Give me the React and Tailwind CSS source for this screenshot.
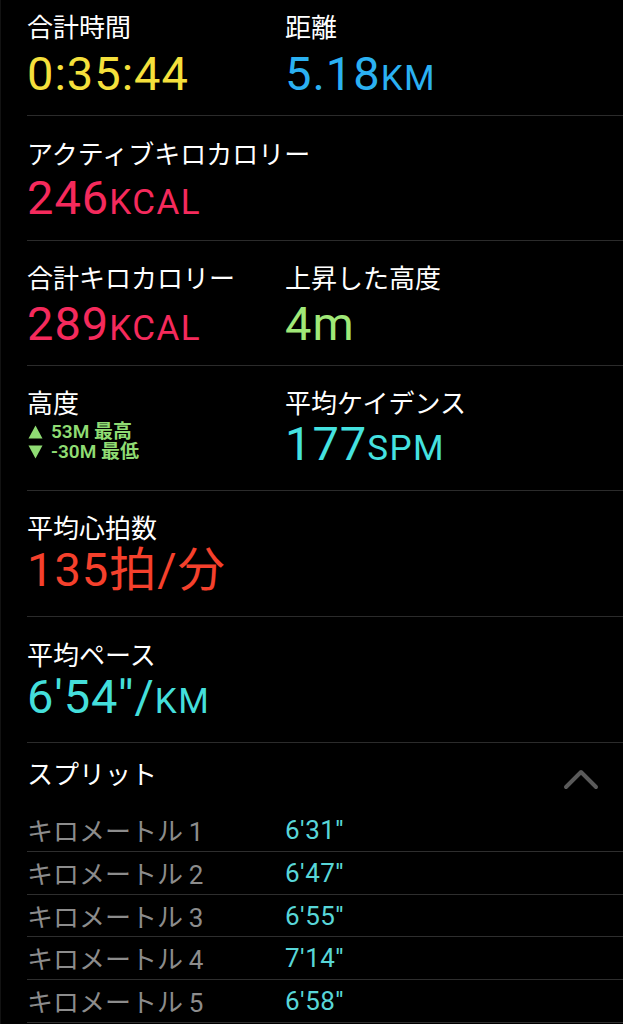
const sans = { fontFamily: 'Roboto, "Noto Sans CJK JP", sans-serif' };
const jp = { fontFamily: '"Noto Sans CJK JP", Roboto, sans-serif' };

function Label({ children }) {
  return (
    <div className="text-[26px] leading-[32px] text-white" style={jp}>
      {children}
    </div>
  );
}

function Value({ num, unit, color, mt = 'mt-[5px]' }) {
  return (
    <div className={`${mt} text-[47px] leading-[47px] tracking-[1px] whitespace-nowrap ${color}`} style={sans}>
      {num}
      {unit && <span className="text-[35px] tracking-[1.5px]">{unit}</span>}
    </div>
  );
}

function Tri({ up }) {
  return (
    <svg width="15" height="14" viewBox="0 0 15 14" className="shrink-0 block">
      {up ? <path d="M7.5 0.5 L14.5 13.5 L0.5 13.5 Z" fill="#8fdc73" /> : <path d="M0.5 0.5 L14.5 0.5 L7.5 13.5 Z" fill="#8fdc73" />}
    </svg>
  );
}

const splits = [
  ['1', "6'31''"],
  ['2', "6'47''"],
  ['3', "6'55''"],
  ['4', "7'14''"],
  ['5', "6'58''"],
];

export default function App() {
  return (
    <div className="w-[623px] h-[1024px] bg-black overflow-hidden border-l border-[#121212]">
      <div className="ml-[26px]">
        {/* Section 1 */}
        <div className="h-[116px] pt-[10px] border-b border-[#2b2b2b] flex">
          <div className="w-[258px]">
            <Label>合計時間</Label>
            <Value num="0:35:44" color="text-[#f5e03c]" mt="mt-[8px]" />
          </div>
          <div>
            <Label>距離</Label>
            <Value num="5.18" unit="KM" color="text-[#2bb1f2]" mt="mt-[8px]" />
          </div>
        </div>

        {/* Section 2 */}
        <div className="h-[125px] pt-[21px] border-b border-[#2b2b2b]">
          <Label>アクティブキロカロリー</Label>
          <Value num="246" unit="KCAL" color="text-[#f52a5c]" />
        </div>

        {/* Section 3 */}
        <div className="h-[125px] pt-[20px] border-b border-[#2b2b2b] flex">
          <div className="w-[258px]">
            <Label>合計キロカロリー</Label>
            <Value num="289" unit="KCAL" color="text-[#f52a5c]" mt="mt-[7px]" />
          </div>
          <div>
            <Label>上昇した高度</Label>
            <Value num="4m" color="text-[#a0e878]" mt="mt-[7px]" />
          </div>
        </div>

        {/* Section 4 */}
        <div className="h-[125px] pt-[20px] border-b border-[#2b2b2b] flex">
          <div className="w-[258px]">
            <Label>高度</Label>
            <div className="mt-[4px] text-[19px] font-semibold text-[#8fdc73]" style={sans}>
              <div className="h-[20px] leading-[20px] flex items-center gap-[8px] ml-[1px] overflow-visible">
                <Tri up />
                <span className="leading-[20px]">53M 最高</span>
              </div>
              <div className="h-[20px] leading-[20px] flex items-center gap-[8px] ml-[1px]">
                <Tri />
                <span className="leading-[20px]">-30M 最低</span>
              </div>
            </div>
          </div>
          <div>
            <Label>平均ケイデンス</Label>
            <Value num="177" unit="SPM" color="text-[#45e2e0]" mt="mt-[2px]" />
          </div>
        </div>

        {/* Section 5 */}
        <div className="h-[126px] pt-[20px] border-b border-[#2b2b2b]">
          <Label>平均心拍数</Label>
          <Value num="135拍/分" color="text-[#f5402c]" mt="mt-[3px]" />
        </div>

        {/* Section 6 */}
        <div className="h-[126px] pt-[21px] border-b border-[#2b2b2b]">
          <Label>平均ペース</Label>
          <Value num={"6'54''/"} unit="KM" color="text-[#44dfdb]" mt="mt-[3px]" />
        </div>

        {/* Splits header */}
        <div className="h-[66px] pt-[14px] flex justify-between">
          <Label>スプリット</Label>
          <svg width="36" height="24" viewBox="0 0 36 24" className="mr-[24px] mt-[10px]">
            <path d="M3 20 L18 5 L33 20" fill="none" stroke="#5a5a5a" strokeWidth="4" strokeLinecap="round" strokeLinejoin="round" />
          </svg>
        </div>

        {splits.map(([n, v]) => (
          <div key={n} className="h-[42.75px] border-b border-[#2e2e2e] flex items-start pt-[5px]">
            <div className="w-[258px] text-[26px] leading-[32px] text-[#8c8c8c]" style={jp}>
              キロメートル <span style={sans}>{n}</span>
            </div>
            <div className="text-[26px] leading-[32px] tracking-[0.5px] text-[#58d6d8]" style={sans}>
              {v}
            </div>
          </div>
        ))}
      </div>
    </div>
  );
}
